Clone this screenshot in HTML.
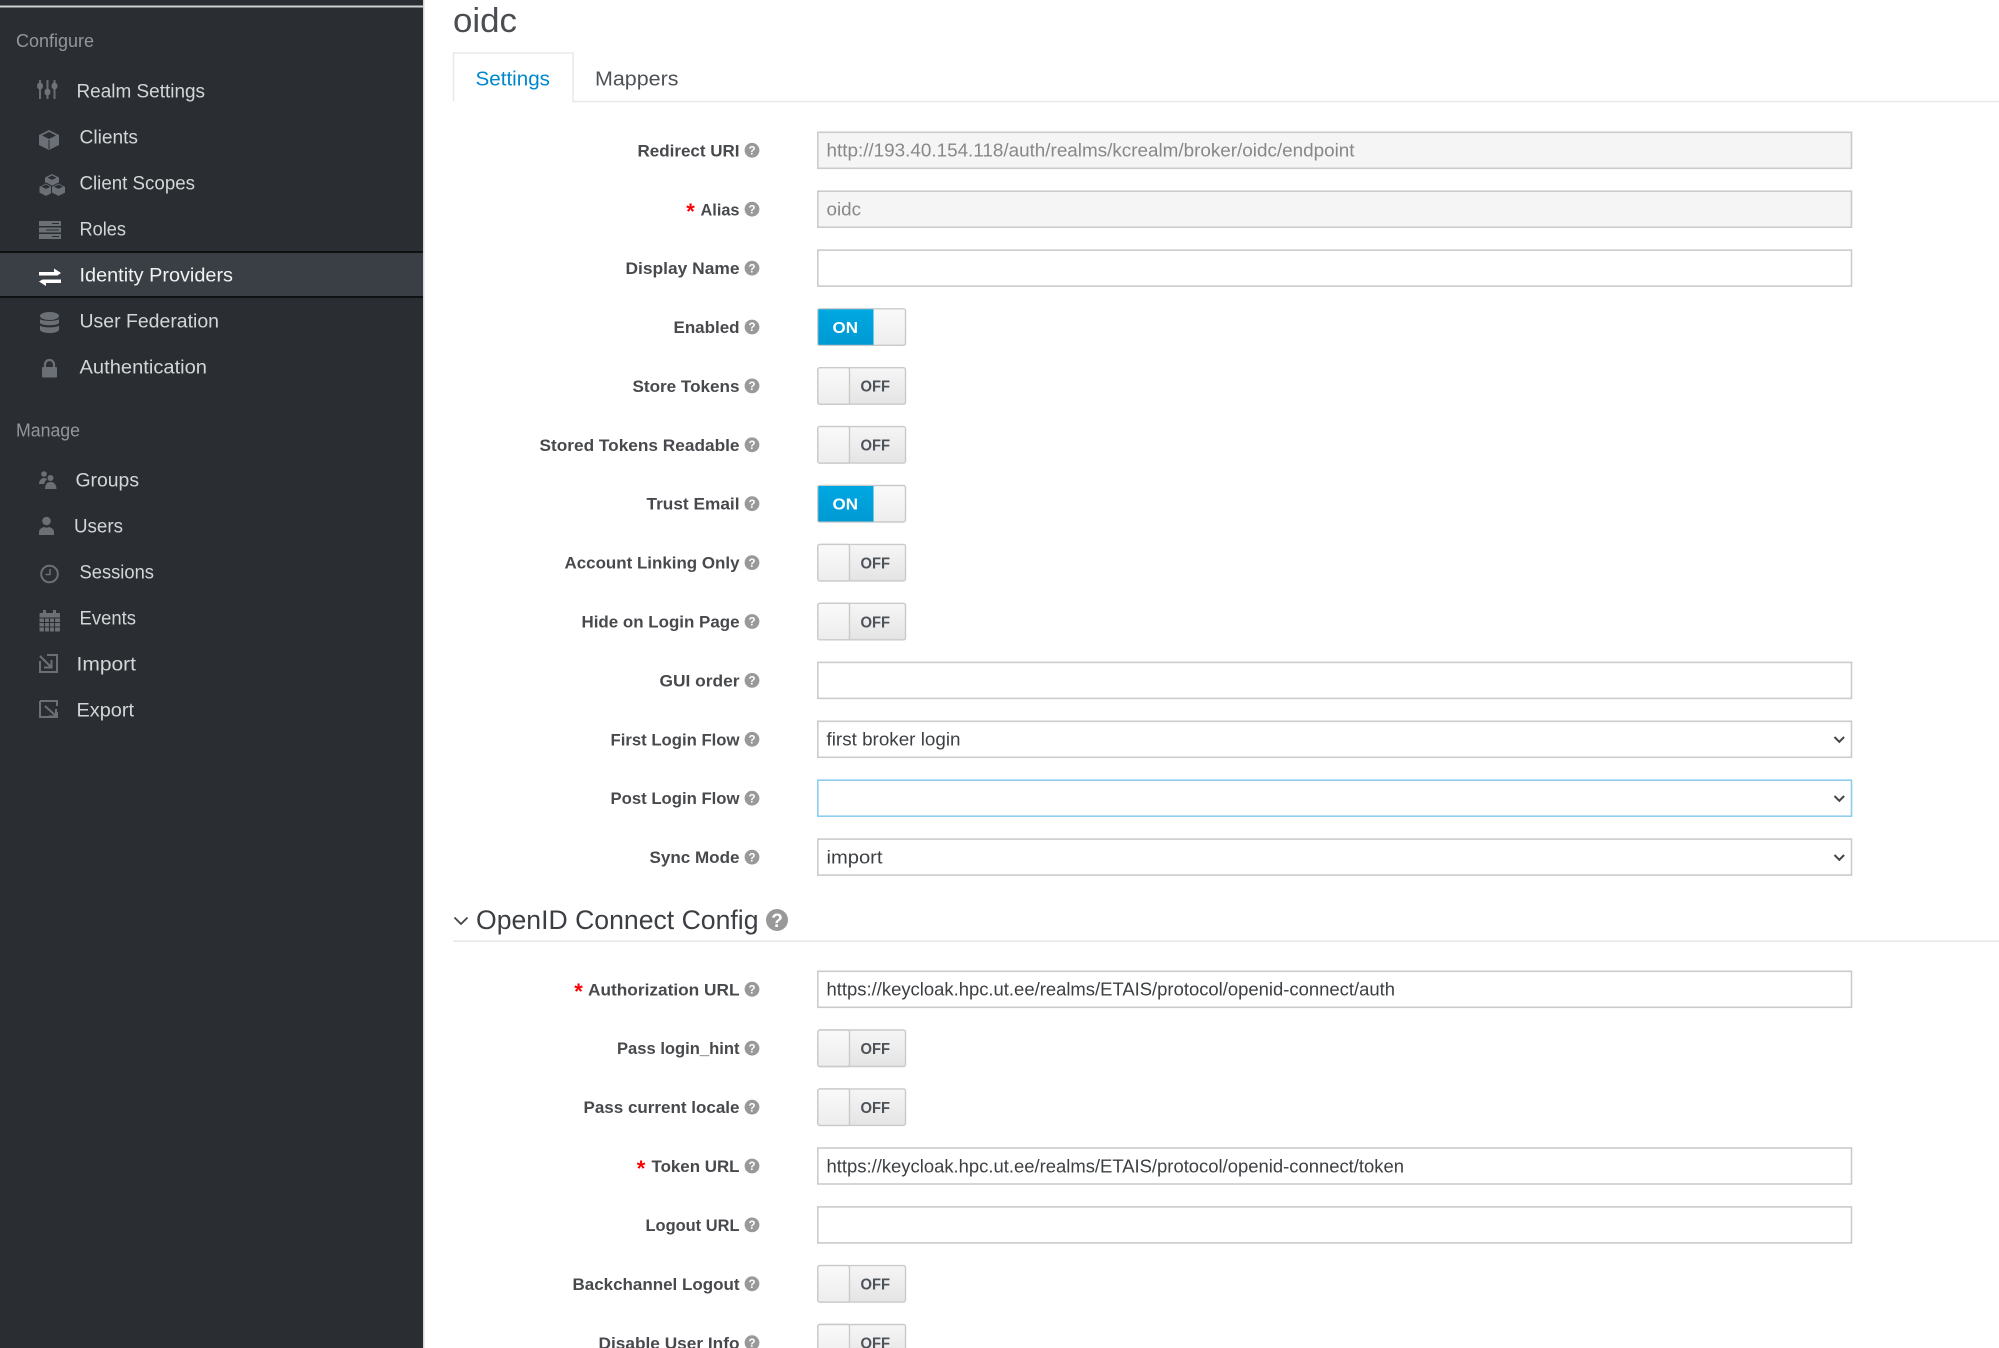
<!DOCTYPE html>
<html lang="en">
<head>
<meta charset="utf-8">
<title>oidc</title>
<style>
html,body{margin:0;padding:0;background:#fff;width:1999px;height:1348px;overflow:hidden}
svg{display:block;font-family:"Liberation Sans",sans-serif;filter:blur(0.35px)}
.sec{font-size:18px;fill:#93969a}
.nav{font-size:19px;fill:#d4d5d6}
.ic{fill:#6b7076}
.ics{fill:none;stroke:#6b7076;stroke-width:2}
.lb{font-size:17px;font-weight:bold;fill:#47494d;text-anchor:end}
.st{font-size:22px;fill:#f00;font-weight:bold}
.q{font-size:11.5px;font-weight:bold;fill:#fff;text-anchor:middle}
.hc{fill:#999}
.inp{fill:#fff;stroke:#cbcbcb;stroke-width:1.6}
.dis{fill:#f5f5f5;stroke:#cbcbcb;stroke-width:1.6}
.tx{font-size:18px;fill:#3d4043}
.dx{font-size:18px;fill:#86888a}
.on{font-size:16px;font-weight:bold;fill:#fff}
.off{font-size:16px;font-weight:bold;fill:#4d5258}
.chev{fill:none;stroke:#43464a;stroke-width:2}
.tb{stroke:#cacaca;stroke-width:1.4}
</style>
</head>
<body>
<svg width="1999" height="1348" viewBox="0 0 1999 1348" xmlns="http://www.w3.org/2000/svg">
<defs>
<linearGradient id="gh" x1="0" y1="0" x2="0" y2="1"><stop offset="0" stop-color="#fafafa"/><stop offset="1" stop-color="#ededed"/></linearGradient>
<linearGradient id="go" x1="0" y1="0" x2="0" y2="1"><stop offset="0" stop-color="#f6f6f6"/><stop offset="1" stop-color="#e4e4e4"/></linearGradient>
<linearGradient id="gb" x1="0" y1="0" x2="0" y2="1"><stop offset="0" stop-color="#00a8e1"/><stop offset="1" stop-color="#0099d3"/></linearGradient>
</defs>

<!-- sidebar -->
<rect x="0" y="0" width="423" height="1348" fill="#2a2e32"/>
<rect x="423" y="0" width="1.5" height="1348" fill="#d8d8d8"/>
<rect x="0" y="5.5" width="423" height="2" fill="#cfd0d1"/>
<rect x="0" y="251" width="423" height="47" fill="#0f1113"/>
<rect x="0" y="253" width="423" height="43" fill="#393f44"/>

<text class="sec" x="16" y="47" textLength="78" lengthAdjust="spacingAndGlyphs">Configure</text>
<text class="nav" x="76.500" y="97.500" textLength="128.500" lengthAdjust="spacingAndGlyphs">Realm Settings</text>
<text class="nav" x="79.500" y="143.500" textLength="58.500" lengthAdjust="spacingAndGlyphs">Clients</text>
<text class="nav" x="79.500" y="189.500" textLength="115.500" lengthAdjust="spacingAndGlyphs">Client Scopes</text>
<text class="nav" x="79.500" y="235.500" textLength="46.500" lengthAdjust="spacingAndGlyphs">Roles</text>
<text class="nav" x="79.500" y="281.500" textLength="153.500" lengthAdjust="spacingAndGlyphs" style="fill:#f2f2f2">Identity Providers</text>
<text class="nav" x="79.500" y="327.500" textLength="139.500" lengthAdjust="spacingAndGlyphs">User Federation</text>
<text class="nav" x="79.500" y="373.500" textLength="127.500" lengthAdjust="spacingAndGlyphs">Authentication</text>
<text class="sec" x="16" y="436.500" textLength="64" lengthAdjust="spacingAndGlyphs">Manage</text>
<text class="nav" x="75.500" y="486.500" textLength="63.500" lengthAdjust="spacingAndGlyphs">Groups</text>
<text class="nav" x="74" y="532.500" textLength="49" lengthAdjust="spacingAndGlyphs">Users</text>
<text class="nav" x="79.500" y="578.500" textLength="74.500" lengthAdjust="spacingAndGlyphs">Sessions</text>
<text class="nav" x="79.500" y="624.500" textLength="56.500" lengthAdjust="spacingAndGlyphs">Events</text>
<text class="nav" x="76.500" y="670.500" textLength="59.500" lengthAdjust="spacingAndGlyphs">Import</text>
<text class="nav" x="76.500" y="716.500" textLength="57.500" lengthAdjust="spacingAndGlyphs">Export</text>

<!-- sidebar icons -->
<path d="M40 80v19M47.500 80v19M54.500 80v19" fill="none" stroke="#6a6e73" stroke-width="2"/>
<g fill="#6f7378"><ellipse cx="40" cy="86" rx="3" ry="3.500"/><ellipse cx="47.500" cy="92" rx="3" ry="3.500"/><ellipse cx="54.500" cy="86" rx="3" ry="3.500"/></g>

<path class="ic" d="M49 130l10 5v10l-10 5-10-5v-10z"/>
<path fill="#2a2e32" d="M49 132l7 3.500-7 3.500-7-3.500z"/>
<path d="M49 140v9" stroke="#2a2e32" stroke-width="1"/>

<path class="ic" d="M52 174l7 3.500v7l-7 3.500-7-3.500v-7z"/><path fill="#2a2e32" d="M52 175.500l4.500 2.200-4.500 2.200-4.500-2.200z"/>
<path class="ic" stroke="#2a2e32" d="M46 183l7 3.500v6.500l-7 3.500-7-3.500v-6.500z"/><path fill="#2a2e32" d="M46 184.500l4.500 2.200-4.500 2.200-4.500-2.200z"/>
<path class="ic" stroke="#2a2e32" d="M58.500 183l7 3.500v6.500l-7 3.500-7-3.500v-6.500z"/><path fill="#2a2e32" d="M58.500 184.500l4.500 2.200-4.500 2.200-4.500-2.200z"/>

<rect class="ic" x="39" y="221" width="22" height="5"/><rect class="ic" x="39" y="227.500" width="22" height="5"/><rect class="ic" x="39" y="234" width="22" height="5"/>
<path d="M52 223.500h7M46 230h13M52 236.500h7" stroke="#2a2e32" stroke-width="1"/>

<path fill="#fff" d="M39 272h15v-3.500l7 4.500-3.500 2.500H39zM61 279.500v3.500H46v3l-7-4.500 3.500-2z"/>

<ellipse class="ic" cx="49.500" cy="316" rx="9.500" ry="4"/>
<path class="ic" d="M40 319c2 2.500 17 2.500 19 0v4c-2 3-17 3-19 0z"/>
<path class="ic" d="M40 325.500c2 2.500 17 2.500 19 0v4.500c-2 4-17 4-19 0z"/>

<rect class="ic" x="42" y="367" width="15" height="10.500" rx="1"/>
<path class="ics" style="stroke-width:2.200" d="M45 368v-3.500a4.500 4.500 0 0 1 9 0v3.500"/>

<circle class="ic" cx="44" cy="474" r="2.800"/><path class="ic" d="M39 484c0-3 2-6 5-6 1.500 0 2.500.5 3 1.500-1.500 1-2.500 2.500-3 4.500z"/>
<circle class="ic" cx="50.500" cy="478" r="3"/><path class="ic" d="M45 489c.2-4 1.500-7 5.500-7s5.800 3 6 7z"/>

<circle class="ic" cx="46.500" cy="521" r="4.300"/><path class="ic" d="M39 535v-3c0-3 3-4.500 5-5 1.500.8 3.500.8 5 0 2 .5 5 2 5 5v3z"/>

<circle class="ics" cx="49.500" cy="574" r="8.300"/><path class="ics" style="stroke-width:1.500" d="M50 569v5.500h-4.500"/>

<rect class="ic" x="39.500" y="613" width="20.500" height="18.500" rx="1"/>
<path class="ic" d="M43 610h3v5h-3zM53 610h3v5h-3z"/>
<path d="M39.500 618h20.500M39.500 622.500h20.500M39.500 627h20.500M44.500 618v13.500M49.500 618v13.500M54.500 618v13.500" stroke="#2a2e32" stroke-width="1.100" fill="none"/>

<path class="ics" d="M47 655h10v17H40v-11"/><path class="ics" d="M40 656l11 11M51.500 660v7.500H44"/>
<path class="ics" d="M40 701h17v5M57 712v5H40v-16"/><path class="ics" d="M45 706l11 10M56 709v7.500h-7.500"/>

<!-- title and tabs -->
<text x="453" y="32" font-size="34" fill="#4a4d51" textLength="64" lengthAdjust="spacingAndGlyphs">oidc</text>
<path d="M453.500 101.500V53h119.500v48.500H1999" fill="none" stroke="#e8e8e8" stroke-width="1.500"/>
<text x="475.500" y="85.500" font-size="20.500" fill="#0088ce" textLength="74.500" lengthAdjust="spacingAndGlyphs">Settings</text>
<text x="595" y="85.500" font-size="20.500" fill="#4d5258" textLength="83.500" lengthAdjust="spacingAndGlyphs">Mappers</text>

<!-- section heading -->
<path d="M454.500 917.500l6.500 6.500 6.500-6.500" fill="none" stroke="#3f4246" stroke-width="1.700"/>
<text x="476" y="929" font-size="26.500" fill="#3b3f44" textLength="282.500" lengthAdjust="spacingAndGlyphs">OpenID Connect Config</text>
<circle class="hc" cx="777" cy="920" r="11"/>
<text x="777" y="927" font-size="19" font-weight="bold" fill="#fff" text-anchor="middle">?</text>
<rect x="453" y="940.500" width="1546" height="1.500" fill="#e6e6e6"/>

<!-- labels -->
<text class="lb" x="739.500" y="156.500" textLength="102" lengthAdjust="spacingAndGlyphs">Redirect URI</text>
<text class="st" x="686.300" y="219">*</text><text class="lb" x="739.500" y="215.500" textLength="39" lengthAdjust="spacingAndGlyphs">Alias</text>
<text class="lb" x="739.500" y="274" textLength="114" lengthAdjust="spacingAndGlyphs">Display Name</text>
<text class="lb" x="739.500" y="333" textLength="66" lengthAdjust="spacingAndGlyphs">Enabled</text>
<text class="lb" x="739.500" y="392" textLength="107" lengthAdjust="spacingAndGlyphs">Store Tokens</text>
<text class="lb" x="739.500" y="451" textLength="200" lengthAdjust="spacingAndGlyphs">Stored Tokens Readable</text>
<text class="lb" x="739.500" y="509.500" textLength="93" lengthAdjust="spacingAndGlyphs">Trust Email</text>
<text class="lb" x="739.500" y="568.500" textLength="175" lengthAdjust="spacingAndGlyphs">Account Linking Only</text>
<text class="lb" x="739.500" y="627.500" textLength="158" lengthAdjust="spacingAndGlyphs">Hide on Login Page</text>
<text class="lb" x="739.500" y="686.500" textLength="80" lengthAdjust="spacingAndGlyphs">GUI order</text>
<text class="lb" x="739.500" y="745.500" textLength="129" lengthAdjust="spacingAndGlyphs">First Login Flow</text>
<text class="lb" x="739.500" y="804" textLength="129" lengthAdjust="spacingAndGlyphs">Post Login Flow</text>
<text class="lb" x="739.500" y="863" textLength="90" lengthAdjust="spacingAndGlyphs">Sync Mode</text>
<text class="st" x="574.300" y="999">*</text><text class="lb" x="739.500" y="995.500" textLength="151.500" lengthAdjust="spacingAndGlyphs">Authorization URL</text>
<text class="lb" x="739.500" y="1054" textLength="122.500" lengthAdjust="spacingAndGlyphs">Pass login_hint</text>
<text class="lb" x="739.500" y="1113" textLength="156" lengthAdjust="spacingAndGlyphs">Pass current locale</text>
<text class="st" x="636.800" y="1176">*</text><text class="lb" x="739.500" y="1172" textLength="88" lengthAdjust="spacingAndGlyphs">Token URL</text>
<text class="lb" x="739.500" y="1231" textLength="94" lengthAdjust="spacingAndGlyphs">Logout URL</text>
<text class="lb" x="739.500" y="1290" textLength="167" lengthAdjust="spacingAndGlyphs">Backchannel Logout</text>
<text class="lb" x="739.500" y="1349" textLength="141" lengthAdjust="spacingAndGlyphs">Disable User Info</text>

<!-- help icons -->
<circle class="hc" cx="752" cy="150.300" r="7.400"/><text class="q" x="752" y="154.500">?</text>
<circle class="hc" cx="752" cy="209.200" r="7.400"/><text class="q" x="752" y="213.400">?</text>
<circle class="hc" cx="752" cy="268.100" r="7.400"/><text class="q" x="752" y="272.300">?</text>
<circle class="hc" cx="752" cy="327" r="7.400"/><text class="q" x="752" y="331.200">?</text>
<circle class="hc" cx="752" cy="385.900" r="7.400"/><text class="q" x="752" y="390.100">?</text>
<circle class="hc" cx="752" cy="444.800" r="7.400"/><text class="q" x="752" y="449">?</text>
<circle class="hc" cx="752" cy="503.700" r="7.400"/><text class="q" x="752" y="507.900">?</text>
<circle class="hc" cx="752" cy="562.600" r="7.400"/><text class="q" x="752" y="566.800">?</text>
<circle class="hc" cx="752" cy="621.500" r="7.400"/><text class="q" x="752" y="625.700">?</text>
<circle class="hc" cx="752" cy="680.400" r="7.400"/><text class="q" x="752" y="684.600">?</text>
<circle class="hc" cx="752" cy="739.300" r="7.400"/><text class="q" x="752" y="743.500">?</text>
<circle class="hc" cx="752" cy="798.200" r="7.400"/><text class="q" x="752" y="802.400">?</text>
<circle class="hc" cx="752" cy="857.100" r="7.400"/><text class="q" x="752" y="861.300">?</text>
<circle class="hc" cx="752" cy="989.300" r="7.400"/><text class="q" x="752" y="993.500">?</text>
<circle class="hc" cx="752" cy="1048.200" r="7.400"/><text class="q" x="752" y="1052.400">?</text>
<circle class="hc" cx="752" cy="1107.100" r="7.400"/><text class="q" x="752" y="1111.300">?</text>
<circle class="hc" cx="752" cy="1166" r="7.400"/><text class="q" x="752" y="1170.200">?</text>
<circle class="hc" cx="752" cy="1224.900" r="7.400"/><text class="q" x="752" y="1229.100">?</text>
<circle class="hc" cx="752" cy="1283.800" r="7.400"/><text class="q" x="752" y="1288">?</text>
<circle class="hc" cx="752" cy="1342.700" r="7.400"/><text class="q" x="752" y="1346.900">?</text>

<!-- inputs -->
<rect class="dis" x="817.800" y="132.300" width="1033.700" height="36"/>
<text class="dx" x="826.500" y="156.500" textLength="528" lengthAdjust="spacingAndGlyphs">http://193.40.154.118/auth/realms/kcrealm/broker/oidc/endpoint</text>
<rect class="dis" x="817.800" y="191.200" width="1033.700" height="36"/>
<text class="dx" x="826.500" y="215.500" textLength="34.500" lengthAdjust="spacingAndGlyphs">oidc</text>
<rect class="inp" x="817.800" y="250.100" width="1033.700" height="36"/>
<rect class="inp" x="817.800" y="662.400" width="1033.700" height="36"/>
<rect class="inp" x="817.800" y="721.300" width="1033.700" height="36"/>
<text class="tx" x="826.500" y="745.500" textLength="134" lengthAdjust="spacingAndGlyphs">first broker login</text>
<path class="chev" d="M1834.500 737l4.800 4.800 4.800-4.800"/>
<rect x="817.800" y="780.200" width="1033.700" height="36" fill="#fff" stroke="#8ccdee" stroke-width="1.600"/>
<path class="chev" d="M1834.500 796l4.800 4.800 4.800-4.800"/>
<rect class="inp" x="817.800" y="839.100" width="1033.700" height="36"/>
<text class="tx" x="826.500" y="863.300" textLength="56" lengthAdjust="spacingAndGlyphs">import</text>
<path class="chev" d="M1834.500 855l4.800 4.800 4.800-4.800"/>
<rect class="inp" x="817.800" y="971.300" width="1033.700" height="36"/>
<text class="tx" x="826.500" y="995.500" textLength="568.500" lengthAdjust="spacingAndGlyphs">https://keycloak.hpc.ut.ee/realms/ETAIS/protocol/openid-connect/auth</text>
<rect class="inp" x="817.800" y="1148" width="1033.700" height="36"/>
<text class="tx" x="826.500" y="1172.300" textLength="577.500" lengthAdjust="spacingAndGlyphs">https://keycloak.hpc.ut.ee/realms/ETAIS/protocol/openid-connect/token</text>
<rect class="inp" x="817.800" y="1206.900" width="1033.700" height="36"/>

<!-- toggles ON -->
<g transform="translate(0,308.800)">
<rect class="tb" x="817.800" y="0" width="87.700" height="36.500" rx="2" fill="url(#gh)"/>
<rect x="818.300" y="0.500" width="55.200" height="35.500" fill="url(#gb)"/>
<text class="on" x="832.500" y="24" textLength="25.500" lengthAdjust="spacingAndGlyphs">ON</text>
</g>
<g transform="translate(0,485.500)">
<rect class="tb" x="817.800" y="0" width="87.700" height="36.500" rx="2" fill="url(#gh)"/>
<rect x="818.300" y="0.500" width="55.200" height="35.500" fill="url(#gb)"/>
<text class="on" x="832.500" y="24" textLength="25.500" lengthAdjust="spacingAndGlyphs">ON</text>
</g>

<!-- toggles OFF -->
<g transform="translate(0,367.700)"><rect class="tb" x="817.800" y="0" width="87.700" height="36.500" rx="2" fill="url(#go)"/><rect class="tb" x="817.800" y="0" width="31.700" height="36.500" rx="2" fill="url(#gh)"/><text class="off" x="860.500" y="24" textLength="29.500" lengthAdjust="spacingAndGlyphs">OFF</text></g>
<g transform="translate(0,426.600)"><rect class="tb" x="817.800" y="0" width="87.700" height="36.500" rx="2" fill="url(#go)"/><rect class="tb" x="817.800" y="0" width="31.700" height="36.500" rx="2" fill="url(#gh)"/><text class="off" x="860.500" y="24" textLength="29.500" lengthAdjust="spacingAndGlyphs">OFF</text></g>
<g transform="translate(0,544.400)"><rect class="tb" x="817.800" y="0" width="87.700" height="36.500" rx="2" fill="url(#go)"/><rect class="tb" x="817.800" y="0" width="31.700" height="36.500" rx="2" fill="url(#gh)"/><text class="off" x="860.500" y="24" textLength="29.500" lengthAdjust="spacingAndGlyphs">OFF</text></g>
<g transform="translate(0,603.300)"><rect class="tb" x="817.800" y="0" width="87.700" height="36.500" rx="2" fill="url(#go)"/><rect class="tb" x="817.800" y="0" width="31.700" height="36.500" rx="2" fill="url(#gh)"/><text class="off" x="860.500" y="24" textLength="29.500" lengthAdjust="spacingAndGlyphs">OFF</text></g>
<g transform="translate(0,1030)"><rect class="tb" x="817.800" y="0" width="87.700" height="36.500" rx="2" fill="url(#go)"/><rect class="tb" x="817.800" y="0" width="31.700" height="36.500" rx="2" fill="url(#gh)"/><text class="off" x="860.500" y="24" textLength="29.500" lengthAdjust="spacingAndGlyphs">OFF</text></g>
<g transform="translate(0,1088.900)"><rect class="tb" x="817.800" y="0" width="87.700" height="36.500" rx="2" fill="url(#go)"/><rect class="tb" x="817.800" y="0" width="31.700" height="36.500" rx="2" fill="url(#gh)"/><text class="off" x="860.500" y="24" textLength="29.500" lengthAdjust="spacingAndGlyphs">OFF</text></g>
<g transform="translate(0,1265.600)"><rect class="tb" x="817.800" y="0" width="87.700" height="36.500" rx="2" fill="url(#go)"/><rect class="tb" x="817.800" y="0" width="31.700" height="36.500" rx="2" fill="url(#gh)"/><text class="off" x="860.500" y="24" textLength="29.500" lengthAdjust="spacingAndGlyphs">OFF</text></g>
<g transform="translate(0,1324.500)"><rect class="tb" x="817.800" y="0" width="87.700" height="36.500" rx="2" fill="url(#go)"/><rect class="tb" x="817.800" y="0" width="31.700" height="36.500" rx="2" fill="url(#gh)"/><text class="off" x="860.500" y="24" textLength="29.500" lengthAdjust="spacingAndGlyphs">OFF</text></g>
</svg>
</body>
</html>
